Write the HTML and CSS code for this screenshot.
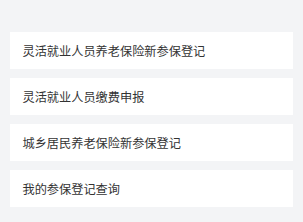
FILE: index.html
```html
<!DOCTYPE html>
<html lang="zh">
<head>
    <meta charset="UTF-8">
    <meta name="viewport" content="width=device-width, initial-scale=1.0">
    <title>参保登记</title>
    <link rel="stylesheet" href="styles.css">
</head>
<body>
    <div class="menu">
        <div class="menu-item">灵活就业人员养老保险新参保登记</div>
        <div class="menu-item">灵活就业人员缴费申报</div>
        <div class="menu-item">城乡居民养老保险新参保登记</div>
        <div class="menu-item">我的参保登记查询</div>
    </div>
</body>
</html>
```

FILE: styles.css
```css
body {
    font-family: "Noto Sans CJK SC", "Noto Sans", sans-serif;
    margin: 0;
    padding: 0;
    background-color: #f3f4f6;
}
.menu {
    display: flex;
    flex-direction: column;
    gap: 9px;
    padding: 32px 10px 0 10px;
}
.menu-item {
    height: 37px;
    display: flex;
    align-items: center;
    padding-left: 12.5px;
    background: #fff;
    font-size: 12.2px;
    color: #333;
}
```
